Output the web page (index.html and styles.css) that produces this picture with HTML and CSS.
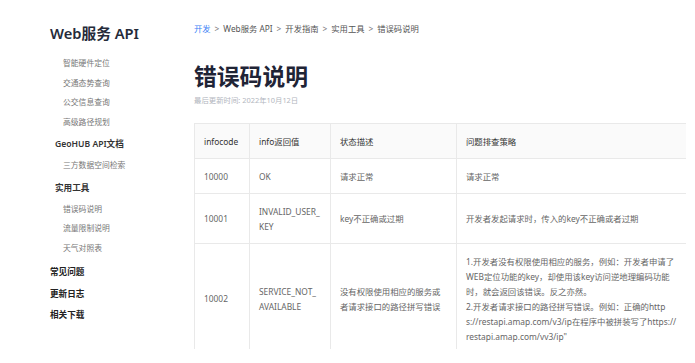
FILE: index.html
```html
<!DOCTYPE html>
<html lang="zh-CN">
<head>
    <meta charset="UTF-8">
    <meta name="viewport" content="width=device-width, initial-scale=1.0">
    <title>错误码说明 - Web服务 API</title>
    <link rel="stylesheet" href="styles.css">
</head>
<body>
    <div class="page">
        <aside class="sidebar">
            <h2 class="side-title">Web服务 API</h2>
            <ul class="menu">
                <li class="sub"><a href="#">智能硬件定位</a></li>
                <li class="sub"><a href="#">交通态势查询</a></li>
                <li class="sub"><a href="#">公交信息查询</a></li>
                <li class="sub"><a href="#">高级路径规划</a></li>
                <li class="group"><a href="#">GeoHUB API文档</a></li>
                <li class="sub"><a href="#">三方数据空间检索</a></li>
                <li class="group"><a href="#">实用工具</a></li>
                <li class="sub"><a href="#">错误码说明</a></li>
                <li class="sub"><a href="#">流量限制说明</a></li>
                <li class="sub"><a href="#">天气对照表</a></li>
                <li class="top first"><a href="#">常见问题</a></li>
                <li class="top"><a href="#">更新日志</a></li>
                <li class="top"><a href="#">相关下载</a></li>
            </ul>
        </aside>
        <main class="content">
            <div class="crumbs">
                <a href="#" class="active">开发</a><span class="sep">&gt;</span><a href="#">Web服务 API</a><span class="sep">&gt;</span><a href="#">开发指南</a><span class="sep">&gt;</span><a href="#">实用工具</a><span class="sep">&gt;</span><span>错误码说明</span>
            </div>
            <h1 class="title">错误码说明</h1>
            <p class="updated">最后更新时间: 2022年10月12日</p>
            <div class="table-wrap">
                <table class="codes">
                    <colgroup>
                        <col class="c1">
                        <col class="c2">
                        <col class="c3">
                        <col class="c4">
                    </colgroup>
                    <thead>
                        <tr>
                            <th>infocode</th>
                            <th>info返回值</th>
                            <th>状态描述</th>
                            <th>问题排查策略</th>
                        </tr>
                    </thead>
                    <tbody>
                        <tr>
                            <td>10000</td>
                            <td>OK</td>
                            <td>请求正常</td>
                            <td>请求正常</td>
                        </tr>
                        <tr>
                            <td>10001</td>
                            <td>INVALID_USER_KEY</td>
                            <td>key不正确或过期</td>
                            <td>开发者发起请求时，传入的key不正确或者过期</td>
                        </tr>
                        <tr>
                            <td>10002</td>
                            <td>SERVICE_NOT_AVAILABLE</td>
                            <td>没有权限使用相应的服务或者请求接口的路径拼写错误</td>
                            <td>1.开发者没有权限使用相应的服务，例如：开发者申请了WEB定位功能的key，却使用该key访问逆地理编码功能时，就会返回该错误。反之亦然。<br>2.开发者请求接口的路径拼写错误。例如：正确的https://restapi.amap.com/v3/ip在程序中被拼装写了https://restapi.amap.com/vv3/ip"</td>
                        </tr>
                    </tbody>
                </table>
            </div>
        </main>
    </div>
</body>
</html>
```

FILE: styles.css
```css
body {
    margin: 0;
    padding: 0;
    background-color: #fff;
    font-family: "Noto Sans", "Noto Sans CJK SC", sans-serif;
    color: #333;
}
a {
    color: inherit;
    text-decoration: none;
}
.page {
    display: flex;
}
.sidebar {
    width: 130px;
    padding: 23px 0 0 50px;
    flex-shrink: 0;
}
.side-title {
    margin: 0 0 11px 0;
    font-size: 14.7px;
    line-height: 20px;
    font-weight: 600;
    color: #252b3a;
}
.menu {
    list-style: none;
    margin: 0;
    padding: 0;
}
.menu li.sub {
    padding-left: 13px;
    font-size: 7.8px;
    line-height: 19.5px;
    color: #777;
}
.menu li.group {
    padding-left: 5px;
    font-size: 8.6px;
    line-height: 24px;
    font-weight: 600;
    color: #333;
}
.menu li.top {
    font-size: 8.6px;
    line-height: 21.5px;
    font-weight: 600;
    color: #222;
}
.menu li.first {
    margin-top: 4px;
}
.content {
    flex: 1;
    padding: 21px 9px 0 14px;
    min-width: 0;
}
.crumbs {
    font-size: 8.3px;
    line-height: 15px;
    color: #555;
}
.crumbs .active {
    color: #3d7ff6;
}
.crumbs .sep {
    margin: 0 4px;
    color: #777;
}
.title {
    margin: 26px 0 0 0;
    font-size: 22.8px;
    line-height: 30px;
    font-weight: 700;
    color: #1f2436;
}
.updated {
    margin: 2px 0 0 0;
    font-size: 7.4px;
    line-height: 12px;
    color: #b2b6be;
}
.table-wrap {
    margin-top: 17px;
    height: 226px;
    overflow: hidden;
}
.codes {
    width: 492px;
    table-layout: fixed;
    border-collapse: collapse;
    font-size: 8.4px;
    line-height: 15px;
}
.codes col.c1 {
    width: 55px;
}
.codes col.c2 {
    width: 81px;
}
.codes col.c3 {
    width: 126px;
}
.codes col.c4 {
    width: 230px;
}
.codes th, .codes td {
    border: 1px solid #e9e9e9;
    padding: 9.5px 9px;
    text-align: left;
    vertical-align: middle;
    word-break: break-all;
}
.codes th {
    background-color: #fafafa;
    font-weight: 400;
    color: #333;
}
.codes td {
    color: #666;
}
```
